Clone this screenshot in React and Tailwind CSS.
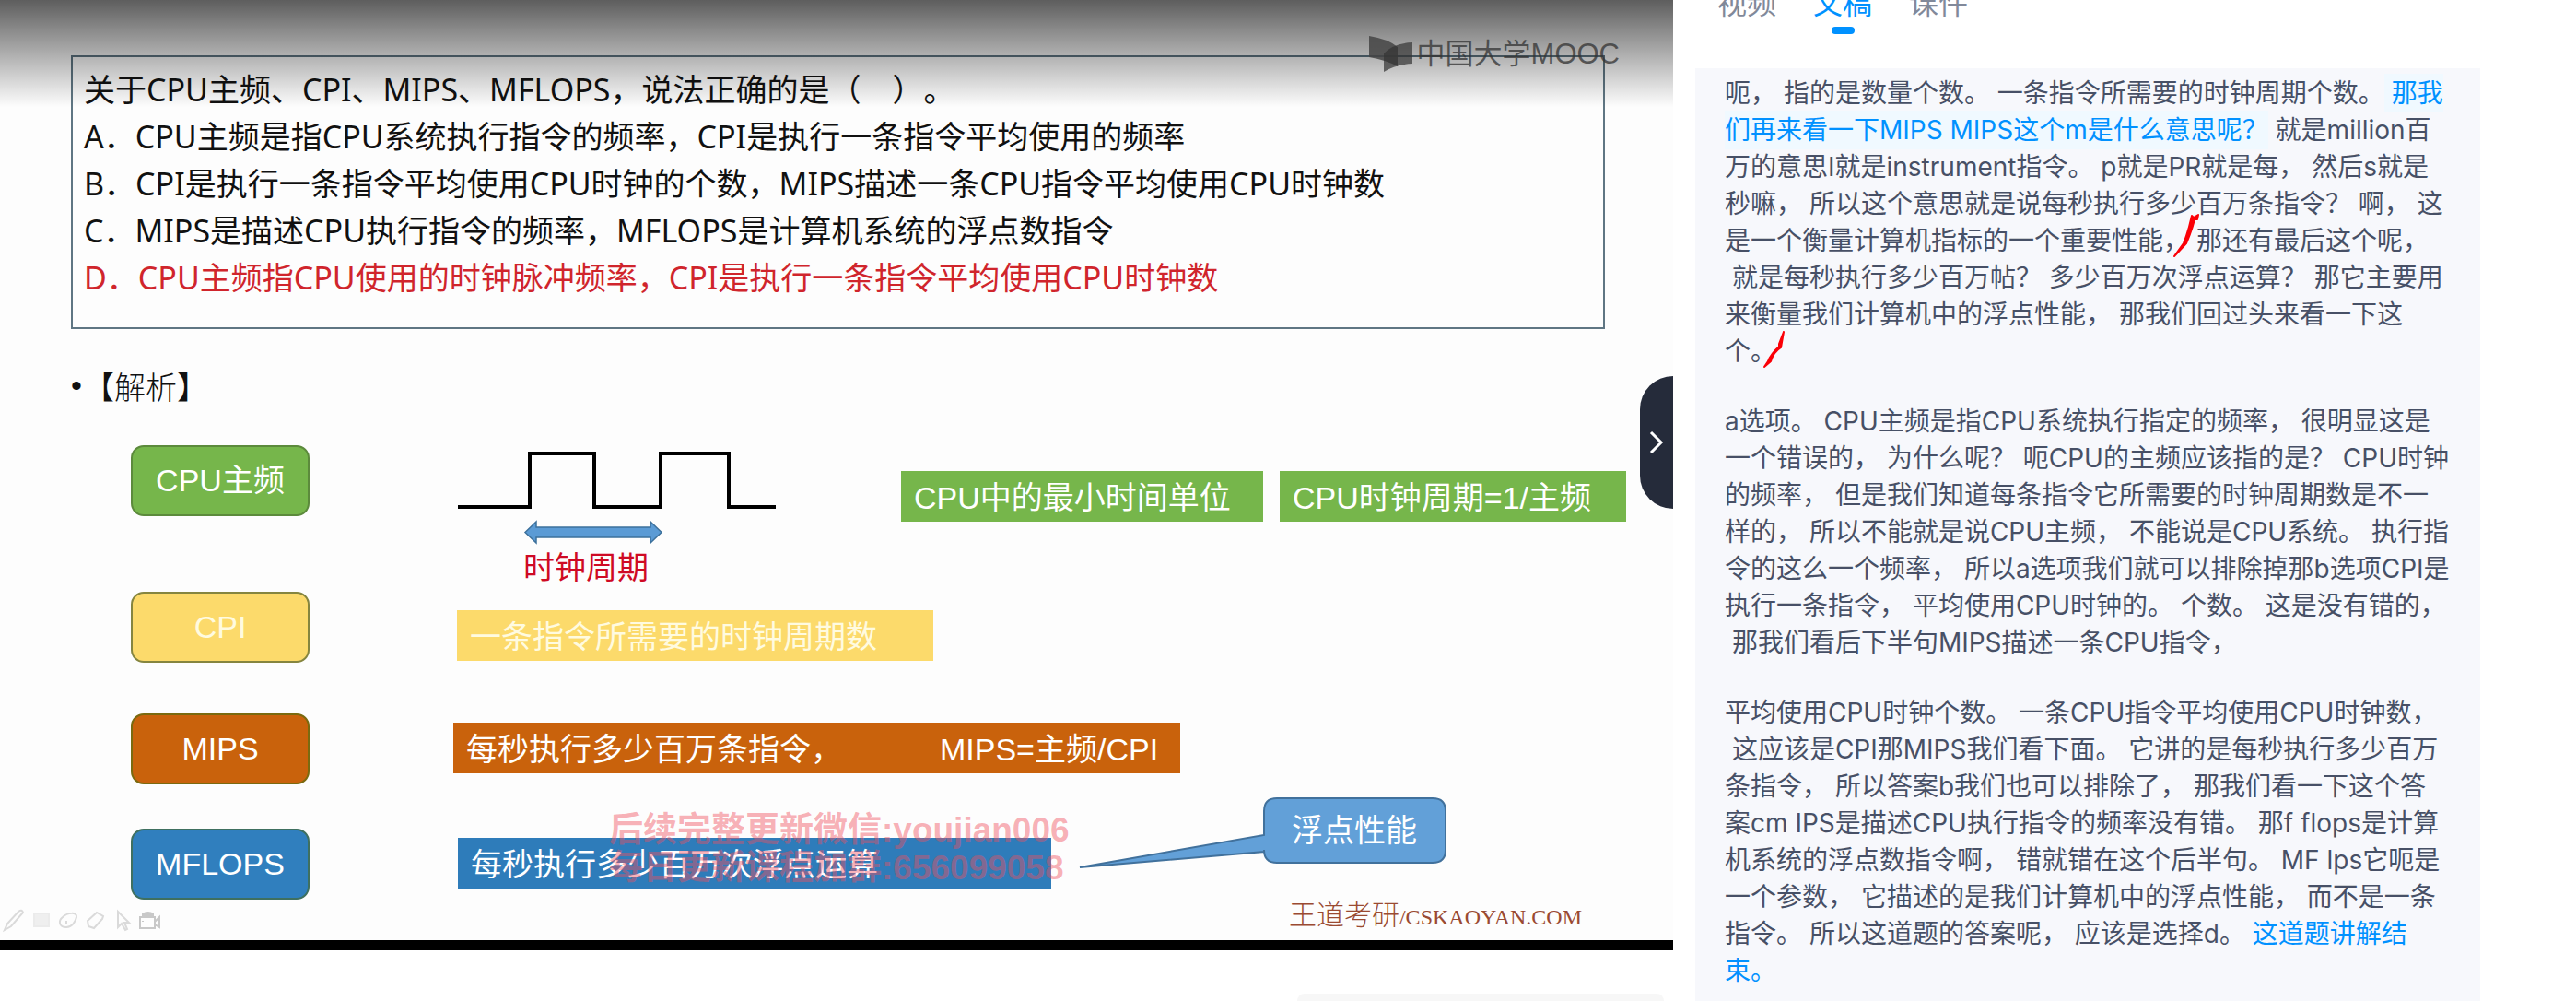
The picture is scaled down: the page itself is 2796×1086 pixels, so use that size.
const tabs = [
  { label: "视频", active: false },
  { label: "文稿", active: true },
  { label: "课件", active: false },
];

const H = ({ children }) => (
  <mark className="bg-[#f0f9ff] py-1 text-[#0091ff]">{children}</mark>
);

const transcript = [
  [
    <>呃， 指的是数量个数。 一条指令所需要的时钟周期个数。<H> 那我</H></>,
    <><H>们再来看一下MIPS MIPS这个m是什么意思呢？</H> 就是million百</>,
    "万的意思I就是instrument指令。 p就是PR就是每， 然后s就是",
    "秒嘛， 所以这个意思就是说每秒执行多少百万条指令？ 啊， 这",
    "是一个衡量计算机指标的一个重要性能， 那还有最后这个呢，",
    " 就是每秒执行多少百万帖？ 多少百万次浮点运算？ 那它主要用",
    "来衡量我们计算机中的浮点性能， 那我们回过头来看一下这",
    "个。",
  ],
  [
    "a选项。 CPU主频是指CPU系统执行指定的频率， 很明显这是",
    "一个错误的， 为什么呢？ 呃CPU的主频应该指的是？ CPU时钟",
    "的频率， 但是我们知道每条指令它所需要的时钟周期数是不一",
    "样的， 所以不能就是说CPU主频， 不能说是CPU系统。 执行指",
    "令的这么一个频率， 所以a选项我们就可以排除掉那b选项CPI是",
    "执行一条指令， 平均使用CPU时钟的。 个数。 这是没有错的，",
    " 那我们看后下半句MIPS描述一条CPU指令，",
  ],
  [
    "平均使用CPU时钟个数。 一条CPU指令平均使用CPU时钟数，",
    " 这应该是CPI那MIPS我们看下面。 它讲的是每秒执行多少百万",
    "条指令， 所以答案b我们也可以排除了， 那我们看一下这个答",
    "案cm IPS是描述CPU执行指令的频率没有错。 那f flops是计算",
    "机系统的浮点数指令啊， 错就错在这个后半句。 MF lps它呃是",
    "一个参数， 它描述的是我们计算机中的浮点性能， 而不是一条",
    <>指令。 所以这道题的答案呢， 应该是选择d。 <span className="text-[#0091ff]">这道题讲解结</span></>,
    <span className="text-[#0091ff]">束。</span>,
  ],
];

const options = [
  "A．CPU主频是指CPU系统执行指令的频率，CPI是执行一条指令平均使用的频率",
  "B．CPI是执行一条指令平均使用CPU时钟的个数，MIPS描述一条CPU指令平均使用CPU时钟数",
  "C．MIPS是描述CPU执行指令的频率，MFLOPS是计算机系统的浮点数指令",
];

function Term({ className, children }) {
  return (
    <div
      className={
        "flex h-[77px] w-[194px] shrink-0 items-center justify-center rounded-[14px] border-2 " +
        className
      }
    >
      {children}
    </div>
  );
}

function Bar({ className, children }) {
  return (
    <div className={"flex h-[55px] shrink-0 items-center whitespace-pre pt-1 pl-[14px] " + className}>
      {children}
    </div>
  );
}

function ClockWave() {
  return (
    <svg width="346" height="102" viewBox="0 0 346 102" fill="none" aria-hidden="true">
      <path d="M0 61H78V3H148V61H220V3H294V61H345" stroke="#000" strokeWidth="4" />
      <path
        d="M73 88.500L85 77V83H209V77L221 88.500L209 100V94H85V100Z"
        fill="#5b9bd5"
        stroke="#3d719c"
        strokeWidth="1.500"
      />
    </svg>
  );
}

function SlideTools() {
  return (
    <svg
      width="176"
      height="26"
      viewBox="0 0 176 26"
      fill="none"
      stroke="#dadada"
      strokeWidth="2"
      aria-hidden="true"
    >
      <path d="M5 23L8 16L20 3Q24 0 25 4L12 19Z" />
      <rect x="37" y="5" width="16" height="14" fill="#efefef" stroke="#ebebeb" />
      <path d="M72 20C64 20 63 13 68 9C73 4 84 3 83 9C82 14 78 20 72 20ZM72 13V16" />
      <path d="M95 13L105 4L112 8L111 11L102 21L96 19Z" />
      <path d="M128 3V20L132 16L136 23L138 22L135 15H140Z" />
      <path d="M152 9H168V21H152ZM168 14L173 9V20L168 17M155 13V14" stroke="#c8c8c8" />
      <path d="M154 5Q161 1 167 5V8H154Z" fill="#c8c8c8" stroke="none" />
    </svg>
  );
}

function Slide() {
  return (
    <section className="relative overflow-hidden border-b-[11px] border-black bg-[#fdfdfd] pt-[60px] font-['Liberation_Sans','Noto_Sans_CJK_SC',sans-serif] text-[34px] leading-[51px]">
      <div className="mx-[74px] ml-[77px] h-[297px] border-2 border-[#5f7683] pt-[10px] pl-3 font-['Noto_Sans','Noto_Sans_CJK_SC',sans-serif] whitespace-nowrap text-[#111]">
        <p>关于CPU主频、CPI、MIPS、MFLOPS，说法正确的是（　）。</p>
        {options.map((o) => (
          <p key={o}>{o}</p>
        ))}
        <p className="text-[#d0252c]">
          D．CPU主频指CPU使用的时钟脉冲频率，CPI是执行一条指令平均使用CPU时钟数
        </p>
      </div>

      <h2 className="mt-9 ml-[77px] flex text-[#111]">
        <span className="w-[13px]">•</span>
        <span className="font-['Noto_Sans_CJK_SC',sans-serif] font-light">【解析】</span>
      </h2>

      <div className="ml-[142px] text-white">
        <div className="mt-[39px] flex h-[159px] items-start">
          <Term className="border-[#5c8a3c] bg-[#76b64b]">CPU主频</Term>
          <div className="mt-[6px] ml-[161px] w-[481px] shrink-0">
            <ClockWave />
            <p className="pl-[71px] text-[#cf0a24]">时钟周期</p>
          </div>
          <div className="mt-[28px] flex gap-[18px]">
            <Bar className="w-[393px] bg-[#76b64b]">CPU中的最小时间单位</Bar>
            <Bar className="w-[376px] bg-[#76b64b]">CPU时钟周期=1/主频</Bar>
          </div>
        </div>
        <div className="flex items-start">
          <Term className="border-[#85853f] bg-[#fcda6b] text-[#fffbe0]">CPI</Term>
          <Bar className="mt-5 ml-[160px] w-[517px] bg-[#fcda6b] text-[#fffbe0]">
            一条指令所需要的时钟周期数
          </Bar>
        </div>
        <div className="mt-[55px] flex items-start">
          <Term className="border-[#7a6a10] bg-[#c9620c]">MIPS</Term>
          <Bar className="mt-[10px] ml-[156px] w-[789px] bg-[#c9620c]">
            <span className="w-[514px]">每秒执行多少百万条指令，</span>
            <span>MIPS=主频/CPI</span>
          </Bar>
        </div>
        <div className="mt-[14px] flex items-start">
          <Term className="mt-[34px] border-[#3f7060] bg-[#307fbe]">MFLOPS</Term>
          <Bar className="mt-[44px] ml-[161px] w-[644px] bg-[#2e7cba]">
            每秒执行多少百万次浮点运算
          </Bar>
          <div className="relative ml-[30px] h-[78px] w-[400px] shrink-0">
            <svg width="400" height="78" viewBox="0 0 400 78" className="block" aria-hidden="true">
              <path
                d="M215 1H384Q398 1 398 15V57Q398 71 384 71H215Q201 71 201 57V59L1 76L201 41V15Q201 1 215 1Z"
                fill="#62a0d8"
                stroke="#41719c"
                strokeWidth="2"
              />
            </svg>
            <span className="absolute top-[11px] left-[231px]">浮点性能</span>
          </div>
        </div>
      </div>

      <div className="flex h-[44px] items-start justify-between pr-[99px]">
        <div className="mt-[10px]">
          <SlideTools />
        </div>
        <p className="font-['Liberation_Serif','Noto_Sans_CJK_SC',serif] text-[30px] leading-[34px] font-light text-[#9a4a32]">
          王道考研<span className="text-2xl">/CSKAOYAN.COM</span>
        </p>
      </div>

      <div className="absolute top-[880px] left-[661px] text-[37px] leading-[41px] font-bold whitespace-nowrap text-[#f0505f]/45">
        <p>后续完整更新微信:youjian006</p>
        <p>每日更新课程加群:656099058</p>
      </div>

      <div className="pointer-events-none absolute inset-x-0 top-0 h-[116px] bg-linear-to-b from-black/63 to-transparent" />

      <div className="absolute top-[39px] right-[58px] flex items-center gap-1 text-[31px] leading-10 text-[#333]/75">
        <svg width="48" height="40" viewBox="0 0 48 40" aria-hidden="true">
          <path d="M0 0Q20 3 31 12V33Q18 26 0 23Z" fill="#444" fillOpacity="0.85" />
          <path d="M47 7Q26 8 16 19V39Q28 31 47 30Z" fill="#333" fillOpacity="0.7" />
        </svg>
        中国大学MOOC
      </div>
    </section>
  );
}

export default function App() {
  return (
    <div className="flex min-h-screen overflow-hidden bg-white [text-spacing-trim:space-all]">
      <main className="relative flex min-w-0 flex-[454] flex-col justify-between">
        <Slide />
        <button
          type="button"
          aria-label="收起侧栏"
          className="absolute top-[408px] right-0 flex h-36 w-9 items-center justify-center rounded-l-[36px] bg-[#252b3a]"
        >
          <svg width="16" height="26" viewBox="0 0 16 26" fill="none" stroke="#fff" strokeWidth="3" aria-hidden="true">
            <path d="M2 2L13 13L2 24" />
          </svg>
        </button>
        <div className="mr-[10px] h-2 w-[398px] self-end rounded-t-[24px] bg-[#f7f7f7]" />
      </main>

      <aside className="flex min-w-0 flex-[245] flex-col font-['Inter','Noto_Sans_CJK_SC',sans-serif]">
        <nav className="-mt-4 flex h-[90px] gap-10 pl-12 text-[32px] leading-10">
          {tabs.map((t) => (
            <button
              key={t.label}
              type="button"
              className={
                t.active
                  ? "flex flex-col items-center gap-[5px] text-[#0091ff]"
                  : "flex flex-col items-center gap-[5px] text-[#81899a]"
              }
            >
              {t.label}
              {t.active && <span className="h-2 w-[25px] rounded-full bg-[#0091ff]" />}
            </button>
          ))}
        </nav>
        <article className="relative mr-[104px] ml-6 flex grow flex-col gap-9 bg-[#f7f8fc] px-8 pt-[7px] text-[28px] leading-10 whitespace-pre text-[#475066]">
          {transcript.map((lines, i) => (
            <p key={i}>
              {lines.map((line, j) => (
                <span key={j} className="block">
                  {line}
                </span>
              ))}
            </p>
          ))}
          <svg
            className="absolute top-[156px] left-[70px]"
            width="480"
            height="172"
            viewBox="0 0 480 172"
            fill="#fb0007"
            stroke="#fb0007"
            strokeWidth="2"
            strokeLinejoin="round"
            strokeLinecap="round"
            aria-hidden="true"
          >
            <path d="M476 3L471 6L469 4Q465 22 460 34L450 48L463 34Q469 20 472 8L475 8Z" />
            <path d="M26 130L21 143V146Q12 154 9 162L5 168L12 162Q15 152 23 147Z" />
          </svg>
        </article>
      </aside>
    </div>
  );
}
